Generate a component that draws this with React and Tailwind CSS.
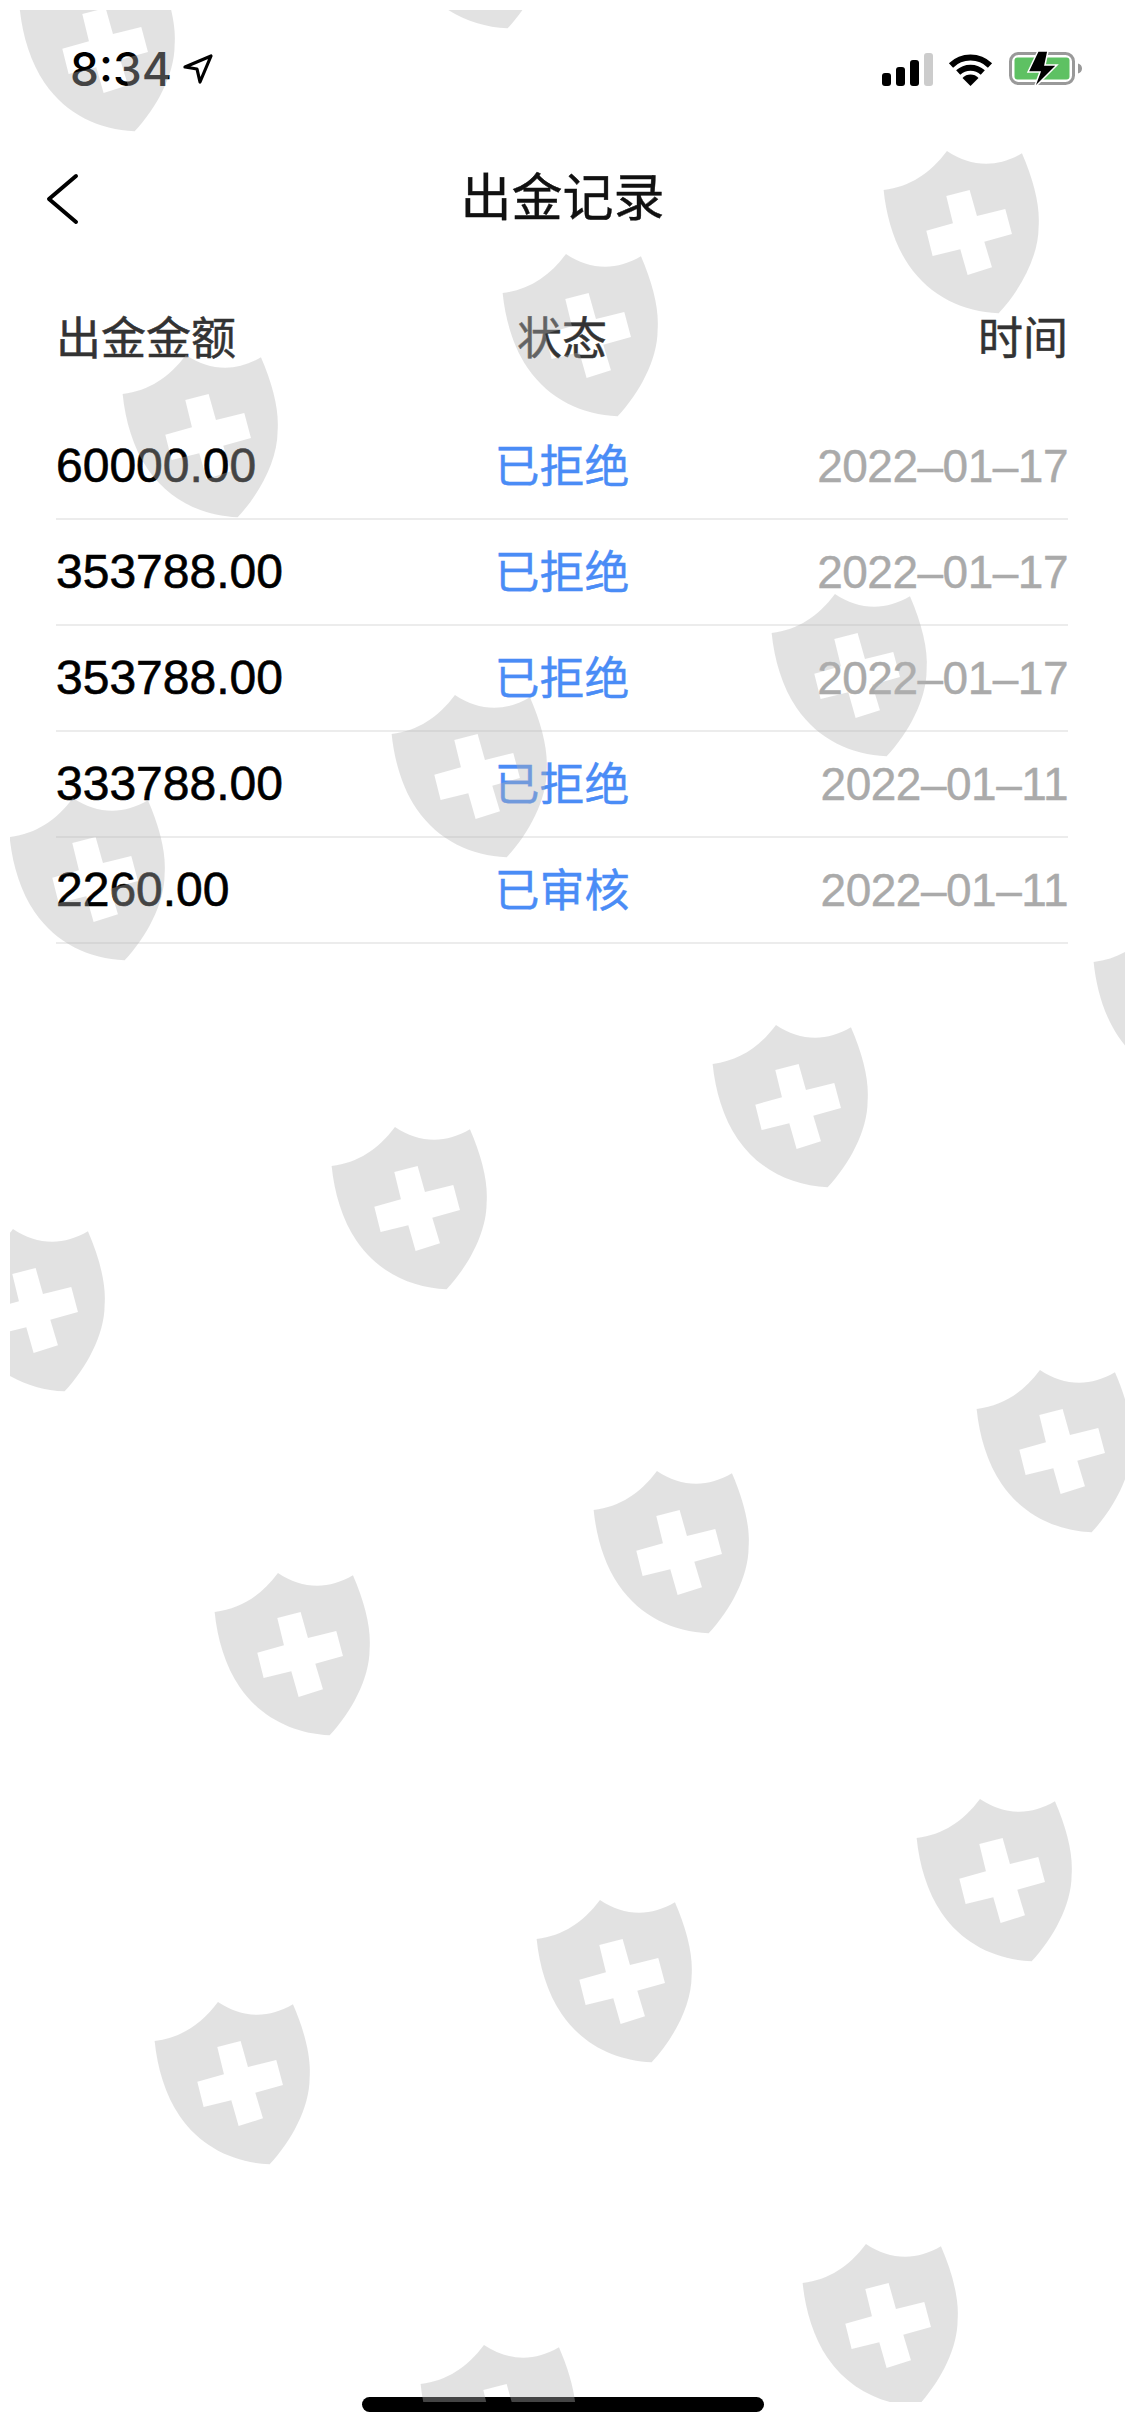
const rows = [
  { amount: '60000.00', status: '已拒绝', date: '2022–01–17' },
  { amount: '353788.00', status: '已拒绝', date: '2022–01–17' },
  { amount: '353788.00', status: '已拒绝', date: '2022–01–17' },
  { amount: '333788.00', status: '已拒绝', date: '2022–01–11' },
  { amount: '2260.00', status: '已审核', date: '2022–01–11' },
];

// centre of each shield in the watermark
const shields = [
  [97, 50], [470, -53], [961, 232], [580, 335], [200, 436], [849, 675], [469, 776], [87, 879],
  [1171, 1004], [790, 1106], [409, 1208], [27, 1310], [1054, 1451], [671, 1552], [292, 1654],
  [994, 1880], [614, 1981], [232, 2083], [880, 2325], [498, 2426],
];

function Watermark() {
  return (
    <svg className="absolute inset-0 pointer-events-none" width="1125" height="2436" viewBox="0 0 1125 2436">
      <defs>
        <clipPath id="wm-area">
          <rect x="10" y="10" width="1115" height="2392" />
        </clipPath>
      </defs>
      <g clipPath="url(#wm-area)">
        {shields.map(([x, y]) => (
          <path
            key={`${x}-${y}`}
            transform={`translate(${x - 90.7} ${y - 92}) scale(0.3333)`}
            fill="#b4b4b4"
            fillOpacity="0.38"
            fillRule="evenodd"
            d="M40 150C120 140 180 100 230 33C300 80 380 85 455 40C490 120 510 200 505 260C505 350 450 450 385 520C280 515 180 470 115 375C72 312 48 230 40 150ZM228 168L298 150L320 228L405 207L425 282L342 305L365 382L292 405L270 328L187 348L168 272L248 250Z"
          />
        ))}
      </g>
    </svg>
  );
}

function StatusBar() {
  return (
    <div className="flex h-[138px] items-center justify-between pl-[70px] pr-[43px]">
      <div className="flex items-center gap-[11px]">
        <span className="font-['Inter',sans-serif] text-[46px] font-medium leading-none text-black">8:34</span>
        <svg width="30" height="30" viewBox="0 0 30 30" fill="none" stroke="#000" strokeWidth="3.2" strokeLinejoin="round">
          <path d="M2 13L28 2L17 28L14 15Z" />
        </svg>
      </div>
      <div className="flex items-center">
        <svg width="51" height="33" viewBox="0 0 51 33">
          <rect x="0" y="20" width="9" height="13" rx="3" fill="#000" />
          <rect x="14" y="14" width="9" height="19" rx="3" fill="#000" />
          <rect x="28" y="7" width="9" height="26" rx="3" fill="#000" />
          <rect x="42" y="0" width="9" height="33" rx="3" fill="#ccc" />
        </svg>
        <svg className="ml-[15px]" width="45" height="33" viewBox="0 0 45 33" fill="none">
          <path d="M3 12.5A28 28 0 0 1 42 12.5" stroke="#000" strokeWidth="6" />
          <path d="M10.2 19.5A18 18 0 0 1 34.8 19.5" stroke="#000" strokeWidth="6" />
          <path d="M22.5 33L14.5 25A11 11 0 0 1 30.5 25Z" fill="#000" />
        </svg>
        <svg className="ml-[16px]" width="73" height="38" viewBox="0 0 73 38">
          <rect x="1.5" y="3.5" width="63" height="30" rx="8" fill="none" stroke="#999" strokeWidth="3" />
          <rect x="5.5" y="7.5" width="55" height="22" rx="3" fill="#5ec163" />
          <path d="M69 13.5C71.5 14 73 16 73 18.5C73 21 71.5 23 69 23.5Z" fill="#999" />
          <path d="M29 1L19 22H31L25 38L48 15H36L39 1Z" fill="#000" stroke="#fff" strokeWidth="1.5" />
        </svg>
      </div>
    </div>
  );
}

export default function App() {
  return (
    <div className="relative flex h-[2436px] w-[1125px] flex-col overflow-hidden bg-white font-['Liberation_Sans','Noto_Sans_CJK_SC',sans-serif]">
      <StatusBar />

      <div className="relative flex h-[118px] items-center justify-center">
        <svg className="absolute left-[46px] top-[35px]" width="34" height="52" viewBox="0 0 34 52" fill="none" stroke="#000" strokeWidth="4" strokeLinecap="round" strokeLinejoin="round">
          <path d="M30 3L3 26L30 49" />
        </svg>
        <h1 className="pb-[6px] font-['Noto_Sans_CJK_SC',sans-serif] text-[51px] font-normal leading-none text-[#111] [-webkit-text-stroke:0.4px_#111]">出金记录</h1>
      </div>

      <div className="mt-[51px] grid h-[56px] grid-cols-3 items-center pl-[56px] pr-[57px] font-['Noto_Sans_CJK_SC',sans-serif] text-[45px] leading-none text-[#333] [-webkit-text-stroke:0.5px_#333]">
        <span>出金金额</span>
        <span className="text-center">状态</span>
        <span className="text-right">时间</span>
      </div>

      <div className="mt-[51px] pl-[56px] pr-[57px]">
        {rows.map((row, index) => (
          <div key={index} className="grid h-[106px] grid-cols-3 items-center border-b-2 border-[#ececec]">
            <span className="text-[48px] leading-none text-black [-webkit-text-stroke:0.6px_#000]">{row.amount}</span>
            <span className="pb-[5px] text-center font-['Noto_Sans_CJK_SC',sans-serif] text-[45px] leading-none text-[#4a8cf6] [-webkit-text-stroke:0.4px_#4a8cf6]">{row.status}</span>
            <span className="text-right text-[46px] leading-none tracking-[-0.5px] text-[#aaaaaa] [-webkit-text-stroke:0.4px_#aaaaaa]">{row.date}</span>
          </div>
        ))}
      </div>

      <div className="mx-auto mb-[24px] mt-auto h-[15px] w-[402px] rounded-full bg-black" />

      <Watermark />
    </div>
  );
}
